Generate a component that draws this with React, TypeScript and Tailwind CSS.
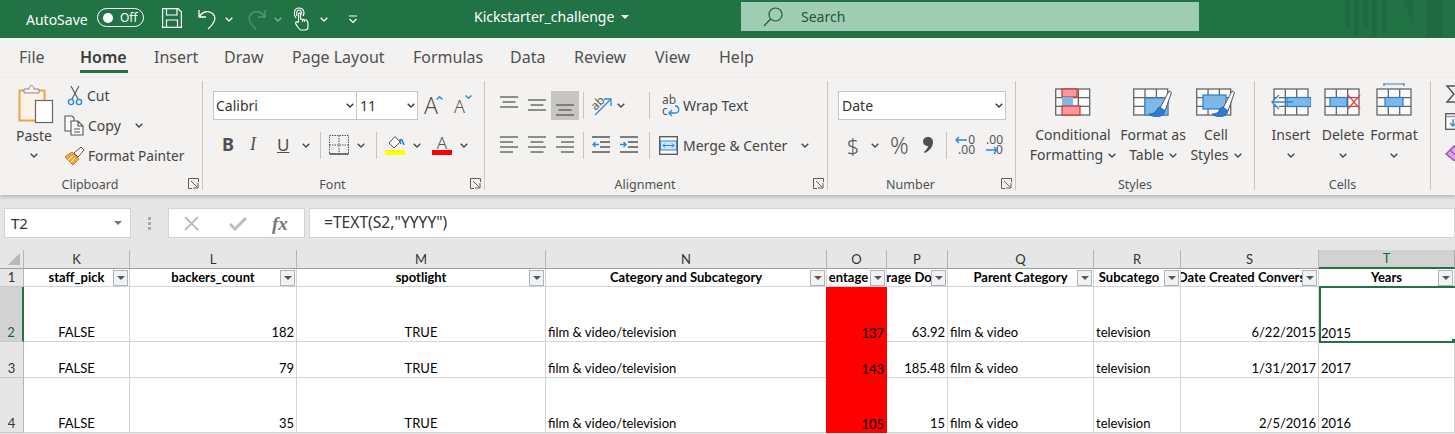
import React from "react";

const Chev = ({ className = "" }: { className?: string }) => (
  <svg viewBox="0 0 8 5" className={`w-[8px] h-[5px] shrink-0 ${className}`} fill="none" stroke="currentColor" strokeWidth="1.3">
    <path d="M0.7 0.7 L4 4 L7.3 0.7" />
  </svg>
);

const Launcher = () => (
  <svg viewBox="0 0 11 11" className="absolute right-[3px] bottom-[1px] w-[11px] h-[11px]" fill="none" stroke="#605e5c" strokeWidth="1">
    <path d="M10.5 4 V0.5 H0.5 V10.5 H4" />
    <path d="M3 3 L9.5 9.5 M5 10 H10 V5" />
  </svg>
);

const Filter = ({ overlay }: { overlay?: boolean }) => (
  <span className={`w-[15px] h-[16px] shrink-0 bg-[#f2f2f2] border border-[#a9b4c4] flex items-center justify-center ${overlay ? "absolute right-[1px] top-[1px]" : "mr-[1px]"}`}>
    <span className="w-0 h-0 border-l-[4px] border-r-[4px] border-t-[4px] border-l-transparent border-r-transparent border-t-[#595959]" />
  </span>
);

const Lines = ({ rows }: { rows: [number, number, number][] }) => (
  <svg viewBox="0 0 18 20" className="w-[18px] h-[20px] shrink-0" stroke="#555" strokeWidth="1.3">
    {rows.map(([x, w, y], i) => (
      <path key={i} d={`M${x} ${y} h${w}`} />
    ))}
  </svg>
);

const V = () => <span className="block w-px h-[27px] bg-[#c8c6c4] shrink-0" />;

const TableIcon = ({ children, w = 38 }: { children?: React.ReactNode; w?: number }) => (
  <svg viewBox={`0 0 ${w} 34`} width={w} height={34} className="shrink-0" fill="none">
    {children}
  </svg>
);

const grid3 = (x: number, y: number, w: number, h: number) => (
  <g stroke="#666" strokeWidth="1.3" fill="#fafafa">
    <rect x={x} y={y} width={w} height={h} />
    <path d={`M${x + w / 3} ${y} V${y + h} M${x + (2 * w) / 3} ${y} V${y + h} M${x} ${y + h / 3} H${x + w} M${x} ${y + (2 * h) / 3} H${x + w}`} />
  </g>
);

const Brush = ({ x = 0 }: { x?: number }) => (
  <g transform={`translate(${x} 0)`}>
    <path d="M26 25 L35 8 L37.5 9.5 L31 28 Z" fill="#fff" stroke="#555" strokeWidth="1" />
    <path d="M26 24 C22 24 24 31 15 31 C19 35 30 35 31 28 Z" fill="#2b7cd3" stroke="#1e62a8" strokeWidth="0.8" />
  </g>
);

const BigCmd = ({ icon, a, b, w, chevInline }: { icon: React.ReactNode; a: string; b?: string; w: string; chevInline?: boolean }) => (
  <div className={`flex flex-col items-center shrink-0 ${w}`}>
    <div className="h-[36px] flex items-end justify-center">{icon}</div>
    <div className="mt-[8px] h-[20px] leading-[20px] text-[14px] whitespace-nowrap">{a}</div>
    {b ? (
      <div className="h-[20px] leading-[20px] text-[14px] whitespace-nowrap flex items-center gap-[5px]">
        {b}
        {chevInline && <Chev />}
      </div>
    ) : (
      <div className="h-[20px] flex items-center"><Chev /></div>
    )}
  </div>
);

const Group = ({ w, label, launcher, children }: { w: string; label: string; launcher?: boolean; children: React.ReactNode }) => (
  <div className={`relative h-[109px] shrink-0 border-r border-[#c8c6c4] flex flex-col ${w}`}>
    <div className="h-[96px] shrink-0">{children}</div>
    <div className={`h-[13px] shrink-0 text-[12.5px] leading-[16px] text-center text-[#505050] ${launcher ? "pr-[22px]" : ""}`}>{label}</div>
    {launcher && <Launcher />}
  </div>
);

const HeadCell = ({ children, active }: { children: React.ReactNode; active?: boolean }) => (
  <div className={`flex items-center justify-center border-r border-b text-[13px] leading-none ${active ? "bg-[#d2d2d2] border-r-[#ababab] border-b-[#217346] border-b-2 text-[#0f6b3b]" : "bg-[#e6e6e6] border-r-[#b5b5b5] border-b-[#9f9f9f] text-[#333]"}`}>
    {children}
  </div>
);

const Title = ({ children, clip }: { children: string; clip?: boolean }) =>
  clip ? (
    <div className="flex items-center bg-white border-r border-b border-[#d4d4d4] overflow-hidden">
      <span className="flex-1 min-w-0 overflow-hidden flex justify-center whitespace-nowrap font-bold text-[13px] text-black">{children}</span>
      <Filter />
    </div>
  ) : (
    <div className="relative flex items-center justify-center bg-white border-r border-b border-[#d4d4d4]">
      <span className="whitespace-nowrap font-bold text-[13px] text-black">{children}</span>
      <Filter overlay />
    </div>
  );

const Cell = ({ children, align = "left", red, active }: { children?: React.ReactNode; align?: "left" | "center" | "right"; red?: boolean; active?: boolean }) => (
  <div
    className={`relative flex items-end whitespace-nowrap text-[13px] leading-[16px] text-black ${
      align === "center" ? "justify-center" : align === "right" ? "justify-end" : "justify-start"
    } ${red ? "bg-[#ff0000] -ml-px z-[1] pl-[2px] pr-[3px] pb-[1px]" : "bg-white"} ${
      active ? "-mt-px -mb-px z-[2] pl-0 pb-0 border-t-2 border-l-2 border-b-2 border-[#217346]" : red ? "" : "px-[2px] pb-[1px] border-r border-b border-[#d4d4d4]"
    }`}
  >
    {children}
    {active && <span className="absolute right-0 -bottom-[2px] w-[3px] h-[4px] bg-[#217346]" />}
  </div>
);

const rows: [string, string, string, string, string][] = [
  ["182", "137", "63.92", "6/22/2015", "2015"],
  ["79", "143", "185.48", "1/31/2017", "2017"],
  ["35", "105", "15", "2/5/2016", "2016"],
];

export default function App() {
  return (
    <div className="w-[1455px] h-[434px] overflow-hidden bg-[#e6e6e6] flex flex-col font-['Noto_Sans',sans-serif] text-[#444]">
      {/* Title bar */}
      <div className="h-[38px] shrink-0 bg-[#217346] flex items-center text-white overflow-hidden">
        <span className="ml-[26px] w-[71px] text-[14px]">AutoSave</span>
        <span className="w-[47px] h-[19px] rounded-full border border-white flex items-center pl-[5px] gap-[7px] text-[12px] mb-[3px]">
          <span className="w-[10px] h-[10px] rounded-full bg-white" />
          Off
        </span>
        <svg viewBox="0 0 20 20" className="ml-[18px] w-[20px] h-[20px] mb-[2px]" fill="none" stroke="#fff" strokeWidth="1.2">
          <path d="M0.6 0.6 H16 L19.4 4 V19.4 H0.6 Z M4.5 0.6 V7 H15 V0.6 M4.5 19.4 V12 H15.5 V19.4" />
        </svg>
        <svg viewBox="0 0 19 22" className="ml-[16px] w-[19px] h-[22px]" fill="none" stroke="#fff" strokeWidth="1.3">
          <path d="M1 2 V9 H8 M1 9 C5 3 11 2 15 6 C19 10 16 16 10 21" />
        </svg>
        <Chev className="ml-[8px]" />
        <svg viewBox="0 0 19 22" className="ml-[14px] w-[19px] h-[22px] opacity-40" fill="none" stroke="#9fd4b5" strokeWidth="1.3">
          <path d="M18 2 V9 H11 M18 9 C14 3 8 2 4 6 C0 10 3 16 9 21" />
        </svg>
        <Chev className="ml-[8px] text-[#7fb096]" />
        <svg viewBox="0 0 16 24" className="ml-[11px] w-[16px] h-[24px]" fill="none" stroke="#fff" strokeWidth="1.1">
          <path d="M3 11 C0 7 1 1 6 1 C11 1 12 6 10 9 M4 9 C3 6 4 3 6 3 C8 3 9 5 8 8" />
          <path d="M5.5 15 V7 C5.5 5.5 7.5 5.5 7.5 7 V12 L13 13 C15 13.5 15 15 15 17 V20 C15 22 14 23 12 23 H8 C6.5 23 3 18 2.5 16 C2.5 14.5 4.5 14.5 5.5 16 M9.5 12 V15 M11.5 12.5 V15" />
        </svg>
        <Chev className="ml-[11px]" />
        <svg viewBox="0 0 10 9" className="ml-[20px] w-[10px] h-[9px]" fill="none" stroke="#fff" strokeWidth="1.2">
          <path d="M1 1 H9 M1.5 4 L5 7.5 L8.5 4" />
        </svg>
        <span className="ml-[116px] text-[14px] w-[139px] whitespace-nowrap mb-[6px]">Kickstarter_challenge</span>
        <span className="ml-[8px] mb-[4px] w-0 h-0 border-l-[4px] border-r-[4px] border-t-[4px] border-l-transparent border-r-transparent border-t-white" />
        <div className="ml-[112px] w-[458px] h-[29px] mb-[5px] bg-[#9fcdb3] flex items-center text-[#22543a]">
          <svg viewBox="0 0 20 20" className="ml-[22px] w-[20px] h-[20px]" fill="none" stroke="#215c3c" strokeWidth="1.2">
            <circle cx="12.5" cy="7.5" r="6.5" />
            <path d="M7.5 12 L1 19" />
          </svg>
          <span className="ml-[18px] text-[14px]">Search</span>
        </div>
        <svg viewBox="0 0 110 38" className="ml-auto w-[110px] h-[38px]" fill="#1f6a41">
          <rect x="0" y="0" width="5" height="27" />
          <rect x="9" y="0" width="5" height="36" />
          <rect x="18" y="0" width="5" height="27" />
          <rect x="27" y="0" width="5" height="38" />
          <rect x="37" y="0" width="5" height="33" />
          <path d="M58 0 H68 V25 Z" />
          <rect x="82" y="0" width="16" height="38" />
        </svg>
      </div>

      {/* Tabs */}
      <div className="h-[40px] shrink-0 bg-[#f3f2f1] flex pl-[19px] text-[16px] text-[#505050]">
        <span className="w-[61px] pt-[7px]">File</span>
        <span className="w-[74px]">
          <span className="inline-block pt-[7px] w-[48px] h-[35px] font-semibold text-[#3b3b3b] border-b-[3px] border-[#217346]">Home</span>
        </span>
        <span className="w-[70px] pt-[7px]">Insert</span>
        <span className="w-[68px] pt-[7px]">Draw</span>
        <span className="w-[121px] pt-[7px]">Page Layout</span>
        <span className="w-[97px] pt-[7px]">Formulas</span>
        <span className="w-[64px] pt-[7px]">Data</span>
        <span className="w-[81px] pt-[7px]">Review</span>
        <span className="w-[64px] pt-[7px]">View</span>
        <span className="pt-[7px]">Help</span>
      </div>

      {/* Ribbon */}
      <div className="relative z-10 h-[117px] shrink-0 bg-[#f3f2f1] flex pt-[3px] shadow-[0_2px_4px_rgba(0,0,0,0.22)] overflow-hidden">
        <Group w="w-[203px]" label="Clipboard" launcher>
          <div className="flex">
            <div className="w-[64px] shrink-0 pl-[17px] pr-[13px] pt-[3px] flex flex-col items-center">
              <svg viewBox="0 0 36 40" className="w-[36px] h-[40px] shrink-0 ml-[4px]" fill="none">
                <rect x="1.5" y="6.5" width="25" height="30" fill="#fdf3e4" stroke="#eda24a" strokeWidth="2" />
                <path d="M6 9 V5 H11 C11 0.5 16 0.5 16 5 H21 V9 Z" fill="#f3f2f1" stroke="#8a8a8a" strokeWidth="1" />
                <rect x="17.5" y="16.5" width="17" height="22" fill="#fff" stroke="#666" strokeWidth="1.2" />
              </svg>
              <span className="text-[14px] leading-[20px] mt-[2px]">Paste</span>
              <Chev className="mt-[7px]" />
            </div>
            <div className="flex flex-col text-[14px] -mt-[1px]">
              <div className="h-[30px] flex items-center">
                <svg viewBox="0 0 16 21" className="ml-[3px] w-[16px] h-[21px]" fill="none">
                  <path d="M4 1 L11 14 M12 1 L5 14" stroke="#555" strokeWidth="1.1" />
                  <circle cx="4" cy="17" r="2.6" stroke="#2b88d8" strokeWidth="1.4" />
                  <circle cx="12" cy="17" r="2.6" stroke="#2b88d8" strokeWidth="1.4" />
                </svg>
                <span className="ml-[4px]">Cut</span>
              </div>
              <div className="h-[30px] flex items-center">
                <svg viewBox="0 0 20 21" className="w-[20px] h-[21px]" fill="#fafafa" stroke="#555" strokeWidth="1.1">
                  <path d="M1 1 H8 L10 3 V16 H1 Z" />
                  <path d="M7 6 H14 L19 11 V20 H7 Z M14 6 V11 H19 M10 14 H16 M10 17 H16" />
                </svg>
                <span className="ml-[4px]">Copy</span>
                <Chev className="ml-[14px]" />
              </div>
              <div className="h-[32px] flex items-center">
                <svg viewBox="0 0 21 20" className="w-[21px] h-[20px]" fill="none">
                  <path d="M1 11 L8 6 L15 13 L9 19 Z" fill="#f4a33f" stroke="#d9781b" strokeWidth="1" />
                  <path d="M4 14 L9 10 M7 16 L11 12" stroke="#fff" strokeWidth="1" />
                  <path d="M10 7 L17 1 L20 4 L14 11 Z" fill="#fff" stroke="#555" strokeWidth="1" />
                </svg>
                <span className="ml-[3px] text-[13.7px]">Format Painter</span>
              </div>
            </div>
          </div>
        </Group>

        <Group w="w-[282px]" label="Font" launcher>
          <div className="pl-[10px] pt-[10px] flex items-center">
            <div className="w-[144px] h-[29px] bg-white border border-[#c6c6c6] flex items-center pl-[2px] pr-[2px] text-[14px] text-[#333]">
              <span className="flex-1">Calibri</span>
              <Chev className="text-[#333]" />
            </div>
            <div className="w-[62px] h-[29px] -ml-px bg-white border border-[#c6c6c6] flex items-center pl-[3px] pr-[2px] text-[14px] text-[#333]">
              <span className="flex-1">11</span>
              <Chev className="text-[#333]" />
            </div>
            <span className="relative ml-[6px] w-[19px] text-[23px] font-light leading-none text-[#555]">A
              <svg viewBox="0 0 7 4" className="absolute right-0 top-[2px] w-[7px] h-[4px]" fill="none" stroke="#2b88d8" strokeWidth="1.3"><path d="M0.5 3.5 L3.5 0.7 L6.5 3.5" /></svg>
            </span>
            <span className="relative ml-[11px] w-[18px] text-[18px] font-light leading-none text-[#555]">A
              <svg viewBox="0 0 7 4" className="absolute right-0 -top-[2px] w-[7px] h-[4px]" fill="none" stroke="#2b88d8" strokeWidth="1.3"><path d="M0.5 0.5 L3.5 3.3 L6.5 0.5" /></svg>
            </span>
          </div>
          <div className="pl-[19px] mt-[10px] h-[30px] flex items-center">
            <span className="w-[28px] mb-[2px] text-[18px] font-bold text-[#505050] leading-none">B</span>
            <span className="w-[27px] mb-[2px] text-[18px] italic font-['Liberation_Serif'] text-[#505050] leading-none">I</span>
            <span className="w-[20px] mb-[2px] text-[17px] underline text-[#505050] leading-none">U</span>
            <Chev className="ml-[5px]" />
            <span className="ml-[10px] mr-[8px]"><V /></span>
            <svg viewBox="0 0 20 20" className="w-[20px] h-[20px]" fill="none" stroke="#555" strokeWidth="1" strokeDasharray="1.5 1">
              <path d="M0.5 0.5 H19.5 V19 H0.5 Z M10 0.5 V19 M0.5 10 H19.5" />
              <path d="M0.5 19 H19.5" strokeDasharray="none" strokeWidth="1.5" />
            </svg>
            <Chev className="ml-[8px]" />
            <span className="ml-[11px] mr-[8px]"><V /></span>
            <svg viewBox="0 0 21 21" className="w-[21px] h-[21px]" fill="none">
              <path d="M4 8 L10 1.5 L15 7 L9 13 Z" fill="#fff" stroke="#555" strokeWidth="1" />
              <path d="M16 9 C14 5 15 4 17 5 L19 10" stroke="#2b7cd3" strokeWidth="1.6" />
              <rect x="0" y="15" width="20" height="5" fill="#ffff00" />
            </svg>
            <Chev className="ml-[7px]" />
            <span className="ml-[11px] flex flex-col items-center w-[20px]">
              <span className="text-[17px] font-light leading-[15px] text-[#555]">A</span>
              <span className="w-[20px] h-[5px] bg-[#ff0000]" />
            </span>
            <Chev className="ml-[8px]" />
          </div>
        </Group>

        <Group w="w-[343px]" label="Alignment" launcher>
          <div className="pl-[15px] pt-[10px] h-[39px] flex items-center">
            <span className="w-[28px]"><Lines rows={[[0, 18, 1], [2.5, 13, 6], [0, 18, 11]]} /></span>
            <span className="w-[23px]"><Lines rows={[[0, 18, 4], [2.5, 13, 9], [0, 18, 14]]} /></span>
            <span className="w-[28px] h-[29px] bg-[#c8c6c4] flex items-center justify-center"><Lines rows={[[0, 18, 9], [2.5, 13, 14], [0, 18, 19]]} /></span>
            <span className="ml-[4px] mr-[8px]"><V /></span>
            <svg viewBox="0 0 21 20" className="w-[21px] h-[20px] overflow-visible" fill="none">
              <path d="M3 19 L18 4 M12 3 H19 V10" stroke="#2b88d8" strokeWidth="1.3" />
              <text x="-1" y="12" fontSize="12" fill="#555" transform="rotate(-45 5 8)">ab</text>
            </svg>
            <Chev className="ml-[4px]" />
            <span className="ml-[24px] mr-[12px]"><V /></span>
            <svg viewBox="0 0 18 20" className="w-[18px] h-[20px] overflow-visible" fill="none">
              <text x="0" y="8" fontSize="12" fill="#555">ab</text>
              <text x="0" y="19" fontSize="12" fill="#555">c</text>
              <path d="M8 17 H13 C18 17 18 10 13 10 M10 14 L7 17 L10 20" stroke="#2b88d8" strokeWidth="1.3" />
            </svg>
            <span className="ml-[3px] text-[14px]">Wrap Text</span>
          </div>
          <div className="pl-[15px] mt-[10px] h-[30px] flex items-center">
            <span className="w-[28px]"><Lines rows={[[0, 18, 2], [0, 13, 7], [0, 18, 12], [0, 13, 17]]} /></span>
            <span className="w-[28px]"><Lines rows={[[0, 18, 2], [2.5, 13, 7], [0, 18, 12], [2.5, 13, 17]]} /></span>
            <span className="w-[23px]"><Lines rows={[[0, 18, 2], [5, 13, 7], [0, 18, 12], [5, 13, 17]]} /></span>
            <span className="ml-[4px] mr-[8px]"><V /></span>
            <svg viewBox="0 0 19 20" className="w-[19px] h-[20px]" fill="none">
              <path d="M0 2 H18 M8 7 H18 M8 12 H18 M0 17 H18" stroke="#555" strokeWidth="1.3" />
              <path d="M1 9.5 H7 M3.5 7 L1 9.5 L3.5 12" stroke="#2b88d8" strokeWidth="1.4" />
            </svg>
            <svg viewBox="0 0 19 20" className="ml-[9px] w-[19px] h-[20px]" fill="none">
              <path d="M0 2 H18 M8 7 H18 M8 12 H18 M0 17 H18" stroke="#555" strokeWidth="1.3" />
              <path d="M0 9.5 H6 M3.5 7 L6 9.5 L3.5 12" stroke="#2b88d8" strokeWidth="1.4" />
            </svg>
            <span className="ml-[10px] mr-[9px]"><V /></span>
            <svg viewBox="0 0 19 19" className="w-[19px] h-[19px]" fill="none">
              <rect x="0.7" y="0.7" width="17.6" height="17.6" fill="#fafafa" stroke="#555" strokeWidth="1.3" />
              <rect x="1.5" y="5" width="16" height="9" fill="#cfe6f7" stroke="#2b88d8" strokeWidth="1" />
              <path d="M4 9.5 H15 M6 7.5 L4 9.5 L6 11.5 M13 7.5 L15 9.5 L13 11.5" stroke="#2b7cd3" strokeWidth="1" />
            </svg>
            <span className="ml-[5px] text-[14px]">Merge &amp; Center</span>
            <Chev className="ml-[14px]" />
          </div>
        </Group>

        <Group w="w-[188px]" label="Number" launcher>
          <div className="pl-[10px] pt-[10px]">
            <div className="w-[168px] h-[29px] bg-white border border-[#c6c6c6] flex items-center pl-[3px] pr-[2px] text-[14px] text-[#333]">
              <span className="flex-1">Date</span>
              <Chev className="text-[#333]" />
            </div>
          </div>
          <div className="pl-[18px] mt-[10px] h-[30px] flex items-center">
            <span className="w-[14px] text-[22px] leading-none text-[#555] text-center font-light">$</span>
            <Chev className="ml-[11px]" />
            <span className="ml-[11px] w-[20px] text-[23px] leading-none text-[#555] font-light">%</span>
            <svg viewBox="0 0 10 16" className="ml-[13px] w-[10px] h-[16px]" fill="#505050">
              <path d="M5 0 C8 0 10 2 10 5 C10 10 6 14 2 16 L1 15 C3 13 5 11 5 9 C2 9 0 7 0 4.5 C0 2 2 0 5 0 Z" />
            </svg>
            <span className="ml-[13px]"><V /></span>
            <span className="ml-[8px] w-[20px] h-[20px] relative text-[12px] leading-[10px] text-[#555]">
              <span className="absolute right-0 top-0">0</span>
              <span className="absolute right-0 bottom-0">.00</span>
              <svg viewBox="0 0 12 8" className="absolute left-0 top-[1px] w-[12px] h-[8px]" fill="none" stroke="#2b88d8" strokeWidth="1.3"><path d="M12 4 H1 M4 1 L1 4 L4 7" /></svg>
            </span>
            <span className="ml-[11px] w-[17px] h-[20px] relative text-[12px] leading-[10px] text-[#555]">
              <span className="absolute right-0 top-0">.00</span>
              <span className="absolute right-0 bottom-0">.0</span>
              <svg viewBox="0 0 12 8" className="absolute left-0 bottom-[1px] w-[12px] h-[8px]" fill="none" stroke="#2b88d8" strokeWidth="1.3"><path d="M0 4 H11 M8 1 L11 4 L8 7" /></svg>
            </span>
          </div>
        </Group>

        <Group w="w-[239px]" label="Styles">
          <div className="flex pl-[14px]">
            <BigCmd w="w-[86px]" a="Conditional" b="Formatting" chevInline icon={
              <TableIcon w={36}>
                {grid3(0.7, 6, 34, 26)}
                <rect x="7" y="6" width="15" height="8" fill="#f79aa0" stroke="#d92c2c" strokeWidth="1.2" />
                <rect x="7" y="14" width="11" height="9" fill="#7db9e8" />
                <rect x="7" y="23" width="18" height="9" fill="#f79aa0" stroke="#d92c2c" strokeWidth="1.2" />
              </TableIcon>
            } />
            <BigCmd w="w-[74px]" a="Format as" b="Table" chevInline icon={
              <TableIcon w={40}>
                {grid3(0.7, 6, 34, 26)}
                <rect x="12" y="15" width="23" height="17" fill="#7db9e8" stroke="#2b7cd3" strokeWidth="1" />
                <Brush x={1} />
              </TableIcon>
            } />
            <BigCmd w="w-[52px]" a="Cell" b="Styles" chevInline icon={
              <TableIcon w={40}>
                {grid3(0.7, 6, 34, 26)}
                <rect x="7" y="12" width="23" height="14" fill="#7db9e8" stroke="#2b7cd3" strokeWidth="1.2" />
                <Brush x={1} />
              </TableIcon>
            } />
          </div>
        </Group>

        <Group w="w-[176px]" label="Cells">
          <div className="flex pl-[10px]">
            <BigCmd w="w-[52px]" a="Insert" icon={
              <TableIcon w={40}>
                {grid3(3, 6, 34, 26)}
                <rect x="16" y="14.5" width="24" height="9" fill="#7db9e8" stroke="#2b7cd3" strokeWidth="1.2" />
                <path d="M22 19 H2 M8 12 L1 19 L8 26" stroke="#2b88d8" strokeWidth="1.3" fill="#f3f2f1" />
              </TableIcon>
            } />
            <BigCmd w="w-[52px]" a="Delete" icon={
              <TableIcon w={38}>
                {grid3(1, 6, 34, 26)}
                <rect x="6" y="14.5" width="17" height="9" fill="#7db9e8" stroke="#2b7cd3" strokeWidth="1.2" />
                <path d="M24 12 L36 26 M36 12 L24 26" stroke="#ee4b4b" strokeWidth="1.5" />
              </TableIcon>
            } />
            <BigCmd w="w-[50px]" a="Format" icon={
              <TableIcon w={36}>
                {grid3(1, 6, 34, 26)}
                <rect x="9" y="14.5" width="18" height="9" fill="#7db9e8" stroke="#2b7cd3" strokeWidth="1.2" />
                <path d="M8 1 H28 M8 0 V3 M28 0 V3" stroke="#2b88d8" strokeWidth="1.2" />
              </TableIcon>
            } />
          </div>
        </Group>

        <div className="pl-[14px] pt-[4px] flex flex-col items-start">
          <svg viewBox="0 0 16 18" className="w-[16px] h-[18px]" fill="none" stroke="#555" strokeWidth="1.5">
            <path d="M15 1 H2 L9 9 L2 17 H15" />
          </svg>
          <svg viewBox="0 0 18 17" className="mt-[10px] w-[18px] h-[17px]" fill="#fff">
            <rect x="0.7" y="0.7" width="16.6" height="15.6" stroke="#555" strokeWidth="1.3" />
            <path d="M1 3.5 H17" stroke="#999" strokeWidth="1.5" />
            <path d="M8 6 V13 M5 10 L8 13 L11 10" fill="none" stroke="#2b88d8" strokeWidth="1.4" />
          </svg>
          <svg viewBox="0 0 18 16" className="mt-[15px] w-[18px] h-[16px]">
            <path d="M1 9 L9 1 L17 9 L9 15.5 Z" fill="#d8a5e2" stroke="#9b4fb0" strokeWidth="1.4" />
            <path d="M5 5 L12 12" stroke="#9b4fb0" strokeWidth="1.2" />
          </svg>
        </div>
      </div>

      {/* Formula bar */}
      <div className="mt-[13px] h-[30px] shrink-0 flex pl-[4px] text-[15px] text-[#333]">
        <div className="w-[127px] bg-white border border-[#d4d4d4] flex items-center pl-[6px] pr-[8px]">
          <span className="flex-1">T2</span>
          <span className="w-0 h-0 border-l-[4px] border-r-[4px] border-t-[4px] border-l-transparent border-r-transparent border-t-[#777]" />
        </div>
        <div className="w-[37px] flex flex-col items-center justify-center gap-[2px]">
          <span className="w-[3px] h-[3px] bg-[#aaa]" />
          <span className="w-[3px] h-[3px] bg-[#aaa]" />
          <span className="w-[3px] h-[3px] bg-[#aaa]" />
        </div>
        <div className="w-[137px] bg-white border border-[#d4d4d4] flex items-center pl-[15px]">
          <svg viewBox="0 0 15 15" className="w-[15px] h-[15px]" fill="none" stroke="#bdbdbd" strokeWidth="2"><path d="M1 1 L14 14 M14 1 L1 14" /></svg>
          <svg viewBox="0 0 18 15" className="ml-[30px] w-[18px] h-[15px]" fill="none" stroke="#bdbdbd" strokeWidth="3"><path d="M1 8 L6 13 L17 2" /></svg>
          <span className="ml-[25px] text-[19px] italic font-bold font-['Liberation_Serif'] text-[#777] leading-none">fx</span>
        </div>
        <div className="flex-1 ml-[4px] bg-white border border-[#d4d4d4] flex items-center pl-[14px] text-[15.6px]">=TEXT(S2,"YYYY")</div>
      </div>

      {/* Sheet */}
      <div className="mt-[12px] flex-1 grid grid-cols-[24px_106px_167px_249px_281px_60px_61px_146px_87px_138px_136px] grid-rows-[19px_18px_55px_36px_55px] font-['Lato',sans-serif]">
        <div className="bg-[#e6e6e6] border-r border-b border-r-[#b5b5b5] border-b-[#9f9f9f] flex items-end justify-end pr-[3px] pb-[3px]">
          <span className="w-0 h-0 border-b-[12px] border-l-[12px] border-b-[#b8b8b8] border-l-transparent" />
        </div>
        {["K", "L", "M", "N", "O", "P", "Q", "R", "S"].map((c) => (
          <HeadCell key={c}>{c}</HeadCell>
        ))}
        <HeadCell active>T</HeadCell>

        <div className="bg-[#e6e6e6] border-r border-b border-r-[#b5b5b5] border-b-[#c8c8c8] flex items-center justify-center text-[13px] text-[#333]">1</div>
        <Title>staff_pick</Title>
        <Title>backers_count</Title>
        <Title>spotlight</Title>
        <Title>Category and Subcategory</Title>
        <Title clip>entage</Title>
        <Title clip>rage Do</Title>
        <Title>Parent Category</Title>
        <Title clip>Subcatego</Title>
        <Title clip>Date Created Convers</Title>
        <Title>Years</Title>

        {rows.map((r, i) => (
          <React.Fragment key={i}>
            <div className={`flex items-end justify-center pb-[1px] border-b text-[13px] leading-[16px] ${i === 0 ? "bg-[#d2d2d2] border-r-2 border-r-[#217346] border-b-[#c8c8c8] text-[#0f6b3b]" : "bg-[#e6e6e6] border-r border-r-[#b5b5b5] border-b-[#c8c8c8] text-[#333]"}`}>{i + 2}</div>
            <Cell align="center">FALSE</Cell>
            <Cell align="right">{r[0]}</Cell>
            <Cell align="center">TRUE</Cell>
            <Cell>film &amp; video/television</Cell>
            <Cell align="right" red>{r[1]}</Cell>
            <Cell align="right">{r[2]}</Cell>
            <Cell>film &amp; video</Cell>
            <Cell>television</Cell>
            <Cell align="right">{r[3]}</Cell>
            <Cell active={i === 0}>{r[4]}</Cell>
          </React.Fragment>
        ))}
      </div>
    </div>
  );
}
